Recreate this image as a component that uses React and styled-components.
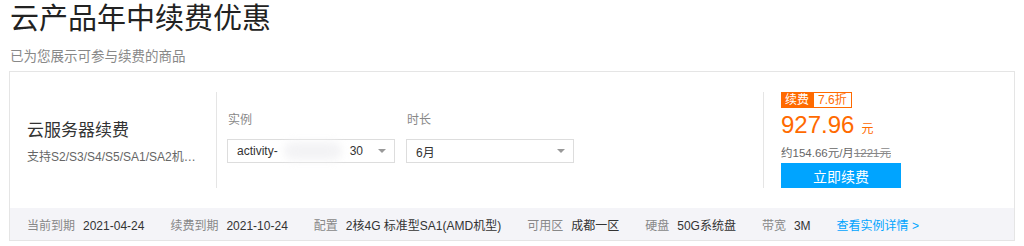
import React from "react";
import styled, { createGlobalStyle } from "styled-components";

const GlobalStyle = createGlobalStyle`
  body {
    margin: 0;
    background: #fff;
    font-family: "Liberation Sans", "Noto Sans CJK SC", sans-serif;
    color: #333;
  }
`;

const Page = styled.div`
  padding: 0 9px;
`;

const Title = styled.h1`
  margin: 0;
  padding: 0 0 0 1px;
  font-size: 29px;
  font-weight: normal;
  line-height: 38px;
  color: #222;
`;

const SubTitle = styled.p`
  margin: 10px 0 0 1px;
  font-size: 13.5px;
  line-height: 18px;
  color: #888;
`;

const Card = styled.div`
  margin-top: 5px;
  border: 1px solid #e5e5e5;
`;

const Main = styled.div`
  display: flex;
  padding: 20px 0;
  height: 96px;
`;

const Intro = styled.div`
  box-sizing: border-box;
  width: 207px;
  padding: 0 20px 0 17px;
  display: flex;
  flex-direction: column;
  justify-content: center;
  border-right: 1px solid #e5e5e5;
`;

const ProductName = styled.div`
  font-size: 17px;
  line-height: 24px;
  color: #333;
  margin-top: 3px;
`;

const ProductDesc = styled.div`
  margin-top: 6px;
  font-size: 12px;
  line-height: 16px;
  color: #666;
  white-space: nowrap;
  overflow: hidden;
  text-overflow: ellipsis;
`;

const Options = styled.div`
  display: flex;
  gap: 11px;
  padding: 20px 0 0 10px;
  width: 536px;
  border-right: 1px solid #e5e5e5;
`;

const Field = styled.div`
  width: 168px;
`;

const Label = styled.div`
  font-size: 12px;
  line-height: 16px;
  color: #888;
  margin-bottom: 11px;
  padding-left: 1px;
`;

const Select = styled.div`
  box-sizing: border-box;
  height: 24px;
  border: 1px solid #ddd;
  display: flex;
  align-items: center;
  padding: 0 8px 0 9px;
  font-size: 12px;
  color: #333;
`;

const SelectText = styled.span`
  flex: 1;
  display: flex;
  align-items: center;
  white-space: nowrap;
`;

const Blur = styled.span`
  display: inline-block;
  width: 58px;
  height: 18px;
  margin: 0 8px 0 6px;
  border-radius: 9px;
  background: #f3f3f5;
  filter: blur(4px);
`;

const Caret = styled.span`
  width: 0;
  height: 0;
  border-left: 4px solid transparent;
  border-right: 4px solid transparent;
  border-top: 4px solid #999;
`;

const Buy = styled.div`
  padding-left: 17px;
  display: flex;
  flex-direction: column;
`;

const Badge = styled.div`
  display: flex;
  height: 16px;
  font-size: 12px;
  line-height: 14px;
`;

const BadgePart = styled.span`
  box-sizing: border-box;
  border: 1px solid #ff6a00;
  padding: 0 ${(p) => (p.$solid ? 3 : 4)}px;
  background: ${(p) => (p.$solid ? "#ff6a00" : "#fff")};
  color: ${(p) => (p.$solid ? "#fff" : "#ff6a00")};
`;

const Price = styled.div`
  margin-top: 3px;
  color: #ff6a00;
  font-size: 24px;
  line-height: 28px;
`;

const Unit = styled.span`
  font-size: 12px;
  margin-left: 7px;
`;

const PerMonth = styled.div`
  margin-top: 2px;
  font-size: 11.5px;
  line-height: 16px;
  color: #666;
`;

const Origin = styled.s`
  color: #888;
`;

const Button = styled.button`
  margin-top: 2px;
  width: 120px;
  height: 29px;
  border: 0;
  background: #00a4ff;
  color: #fff;
  font-family: inherit;
  font-size: 14px;
  cursor: pointer;
`;

const Footer = styled.div`
  background: #f4f4f8;
  height: 32px;
  display: flex;
  align-items: center;
  gap: 26px;
  padding-left: 17px;
  font-size: 12px;
`;

const Info = styled.span`
  display: flex;
  align-items: baseline;
  gap: 8px;
  white-space: nowrap;
`;

const InfoKey = styled.span`
  color: #888;
`;

const InfoValue = styled.span`
  color: #333;
`;

const Link = styled.a`
  color: #00a4ff;
  text-decoration: none;
`;

const infos = [
  ["当前到期", "2021-04-24"],
  ["续费到期", "2021-10-24"],
  ["配置", "2核4G 标准型SA1(AMD机型)"],
  ["可用区", "成都一区"],
  ["硬盘", "50G系统盘"],
  ["带宽", "3M"],
];

export default function App() {
  return (
    <Page>
      <GlobalStyle />
      <Title>云产品年中续费优惠</Title>
      <SubTitle>已为您展示可参与续费的商品</SubTitle>
      <Card>
        <Main>
          <Intro>
            <ProductName>云服务器续费</ProductName>
            <ProductDesc>支持S2/S3/S4/S5/SA1/SA2机型续费</ProductDesc>
          </Intro>
          <Options>
            <Field>
              <Label>实例</Label>
              <Select>
                <SelectText>
                  activity-
                  <Blur />
                  30
                </SelectText>
                <Caret />
              </Select>
            </Field>
            <Field>
              <Label>时长</Label>
              <Select>
                <SelectText>6月</SelectText>
                <Caret />
              </Select>
            </Field>
          </Options>
          <Buy>
            <Badge>
              <BadgePart $solid>续费</BadgePart>
              <BadgePart>7.6折</BadgePart>
            </Badge>
            <Price>
              927.96<Unit>元</Unit>
            </Price>
            <PerMonth>
              约154.66元/月<Origin>1221元</Origin>
            </PerMonth>
            <Button>立即续费</Button>
          </Buy>
        </Main>
        <Footer>
          {infos.map(([k, v]) => (
            <Info key={k}>
              <InfoKey>{k}</InfoKey>
              <InfoValue>{v}</InfoValue>
            </Info>
          ))}
          <Link href="#">查看实例详情 &gt;</Link>
        </Footer>
      </Card>
    </Page>
  );
}
